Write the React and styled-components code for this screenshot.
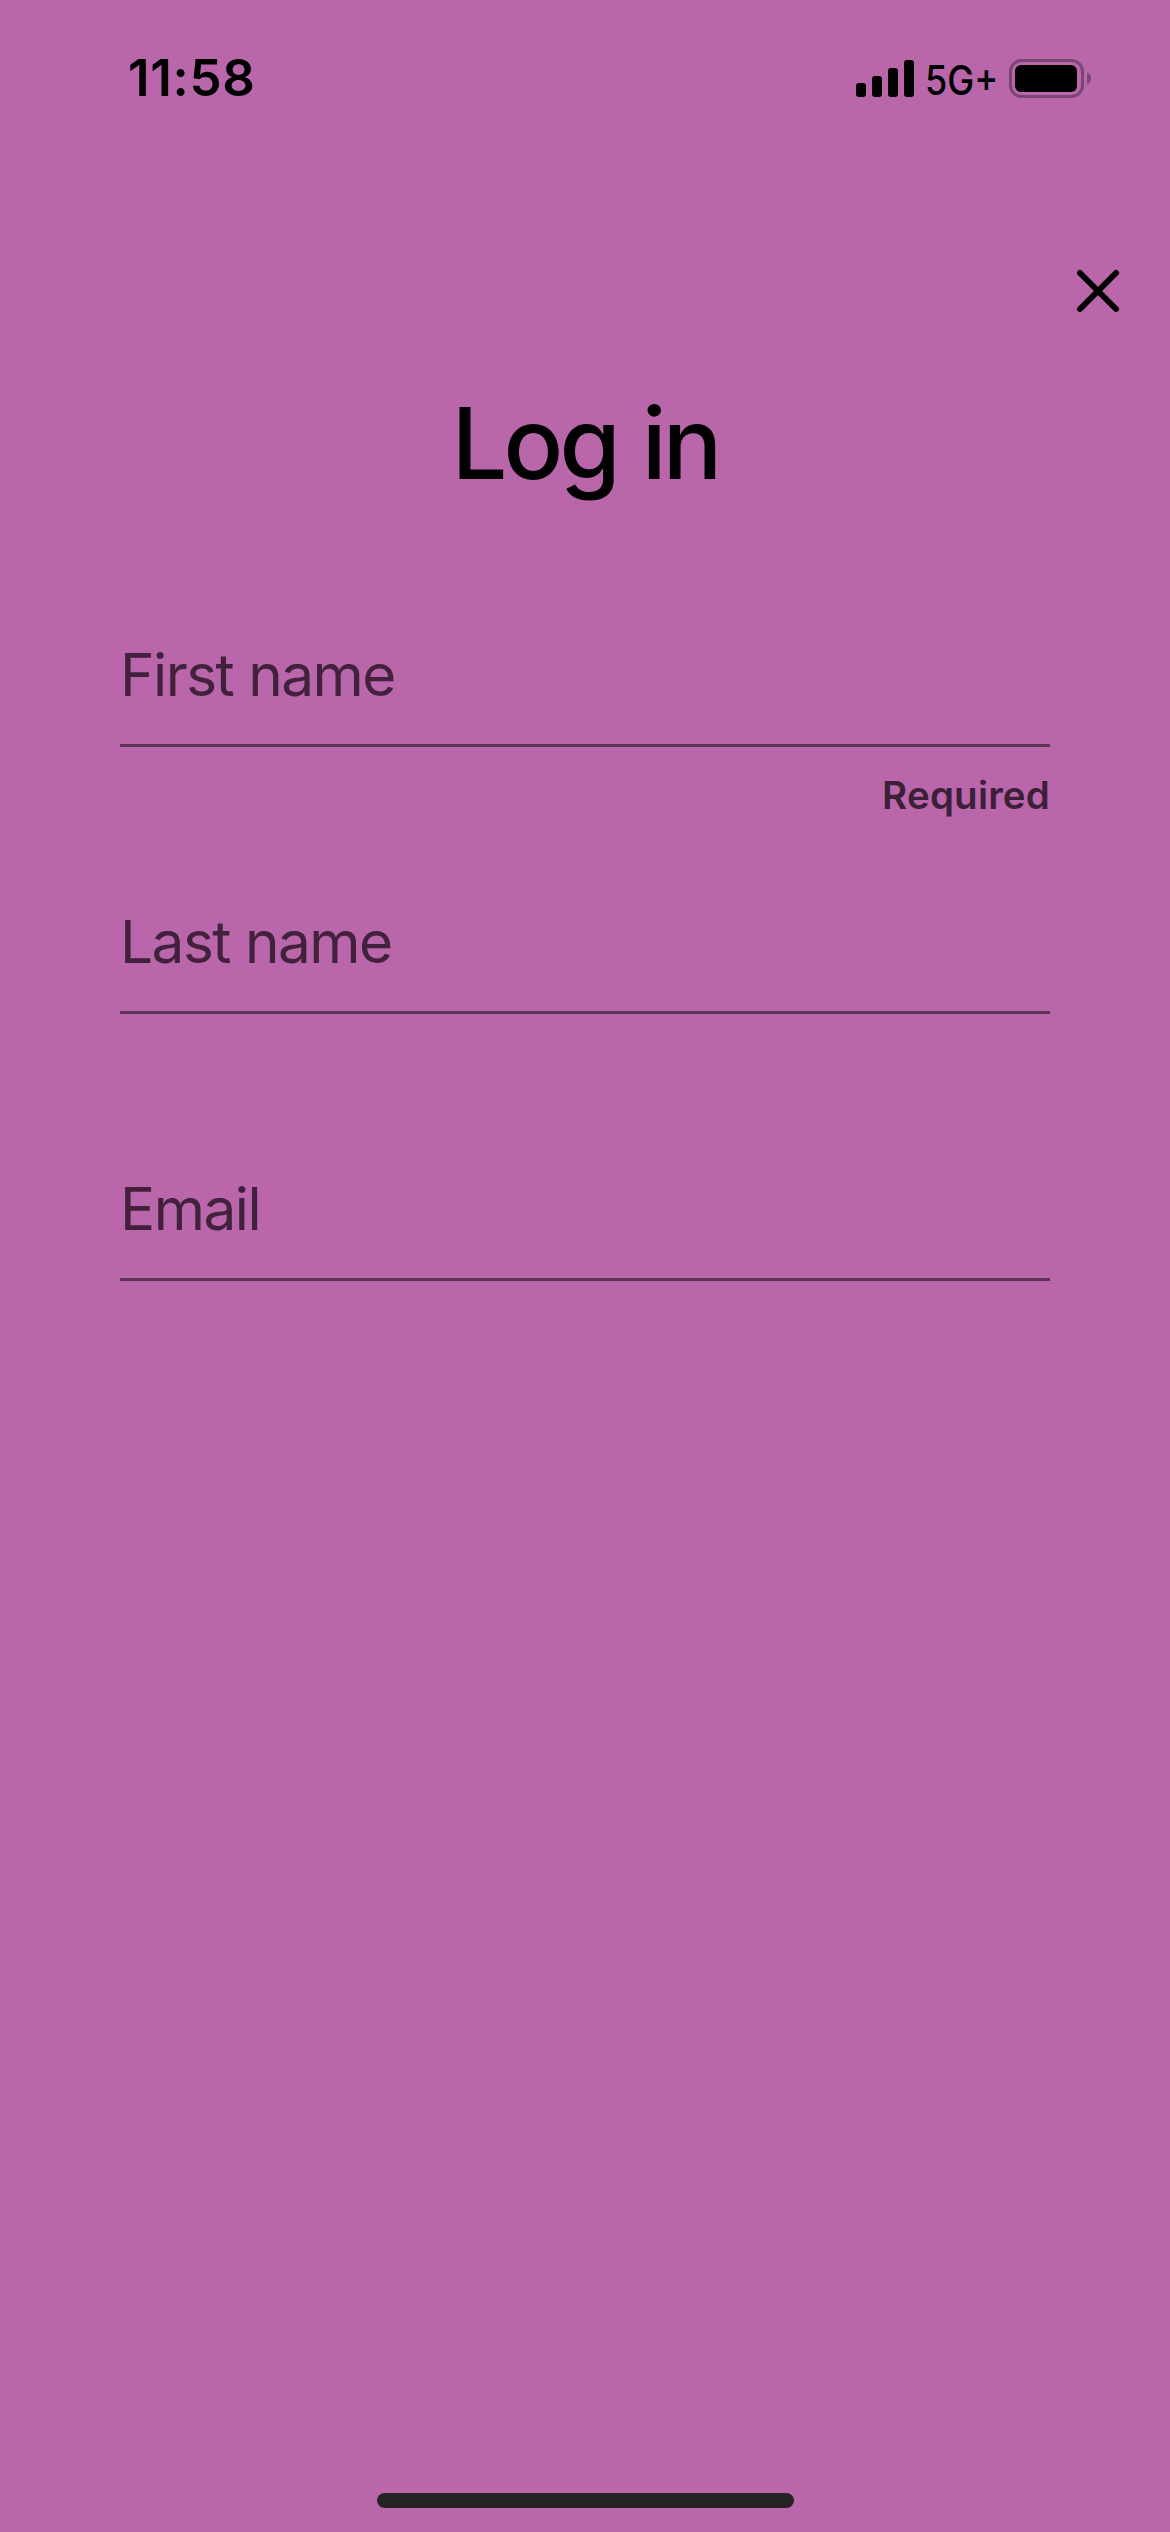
import styled, {createGlobalStyle} from "styled-components";

const GlobalStyle = createGlobalStyle`
  body {
    margin: 0;
    background-color: #b966ab;
  }
`;

const Screen = styled.div`
  width: 1170px;
  height: 2532px;
  display: flex;
  flex-direction: column;
  background-color: #b966ab;
  color: #000;
  font-family: Inter, "Liberation Sans", sans-serif;
  overflow: hidden;
`;

const StatusBar = styled.header`
  height: 156px;
  padding: 0 78px 0 128px;
  box-sizing: border-box;
  display: flex;
  align-items: center;
  justify-content: space-between;
`;

const Time = styled.span`
  font-size: 51px;
  line-height: 60px;
  font-weight: 600;
  letter-spacing: 0.7px;
`;

const StatusIcons = styled.div`
  display: flex;
  align-items: center;
`;

const Network = styled.span`
  width: 72px;
  margin: 3px 12px 0 11px;
  font-size: 41px;
  line-height: 48px;
  font-weight: 550;
  white-space: nowrap;
  transform: scaleX(0.88);
  transform-origin: left center;
`;

const TopBar = styled.div`
  padding: 112px 49px 0 0;
  display: flex;
  justify-content: flex-end;
`;

const CloseButton = styled.button`
  width: 46px;
  height: 46px;
  padding: 0;
  border: none;
  background: transparent;
  color: inherit;
  display: flex;
`;

const Title = styled.h1`
  margin: 69px 0 0;
  font-size: 99px;
  line-height: 120px;
  font-weight: 530;
  letter-spacing: -3.8px;
  word-spacing: 2px;
  text-align: center;
`;

const Form = styled.form`
  margin-top: 118px;
  padding: 0 120px;
  display: flex;
  flex-direction: column;
  flex: 1;
`;

const Field = styled.div`
  height: 267px;
  display: flex;
  flex-direction: column;
`;

const Label = styled.label`
  padding-bottom: 15px;
  border-bottom: 3px solid #5b3355;
  color: #41213b;
  font-size: 58.5px;
  line-height: 108px;
  font-weight: 400;
  letter-spacing: -1.5px;
`;

const Helper = styled.span`
  padding-top: 24px;
  color: #3b2037;
  font-size: 38.5px;
  line-height: 48px;
  font-weight: 600;
  letter-spacing: 0.2px;
  text-align: right;
`;

const HomeArea = styled.footer`
  padding-bottom: 24px;
  display: flex;
  justify-content: center;
`;

const HomeIndicator = styled.div`
  width: 417px;
  height: 15px;
  border-radius: 8px;
  background-color: #242424;
`;

const fields = [
    {id: "firstName", label: "First name", helper: "Required"},
    {id: "lastName", label: "Last name"},
    {id: "email", label: "Email"}
];

function SignalIcon() {
    return (
        <svg width="58" height="37" viewBox="0 0 58 37">
            <rect x="0" y="23" width="10" height="14" rx="3" />
            <rect x="16" y="16" width="10" height="21" rx="3" />
            <rect x="32" y="8" width="10" height="29" rx="3" />
            <rect x="48" y="0" width="10" height="37" rx="3" />
        </svg>
    );
}

function BatteryIcon() {
    return (
        <svg width="83" height="39" viewBox="0 0 83 39">
            <rect x="1.5" y="1.5" width="72" height="36" rx="11" fill="none" stroke="#7b4672" strokeWidth="3" />
            <rect x="6" y="6" width="62" height="27" rx="6" />
            <path d="M78 13.5C80.5 14.5 82 16.8 82 19.5S80.5 24.5 78 25.5Z" fill="#7b4672" />
        </svg>
    );
}

function App() {
    return (
        <>
            <GlobalStyle />
            <Screen>
                <StatusBar>
                    <Time>11:58</Time>
                    <StatusIcons>
                        <SignalIcon />
                        <Network>5G+</Network>
                        <BatteryIcon />
                    </StatusIcons>
                </StatusBar>
                <TopBar>
                    <CloseButton aria-label="Close">
                        <svg width="46" height="46" viewBox="0 0 46 46" fill="none" stroke="currentColor" strokeWidth="6" strokeLinecap="round">
                            <path d="M5 5L41 41M41 5L5 41" />
                        </svg>
                    </CloseButton>
                </TopBar>
                <Title>Log in</Title>
                <Form>
                    {fields.map(field => (
                        <Field key={field.id}>
                            <Label>{field.label}</Label>
                            {field.helper ? <Helper>{field.helper}</Helper> : ""}
                        </Field>
                    ))}
                </Form>
                <HomeArea>
                    <HomeIndicator />
                </HomeArea>
            </Screen>
        </>
    );
}

export default App;
